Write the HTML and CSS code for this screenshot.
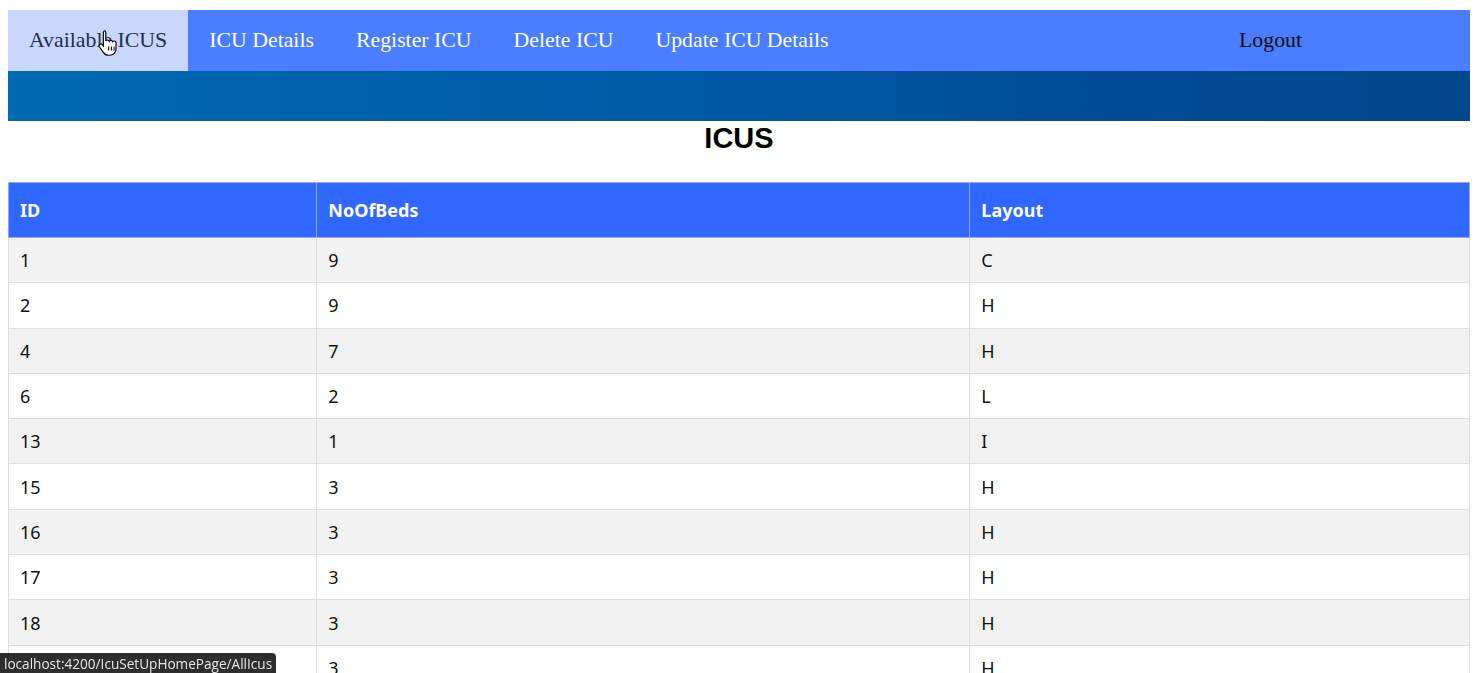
FILE: index.html
```html
<!DOCTYPE html>
<html lang="en">
<head>
<meta charset="utf-8">
<title>ICUS</title>
<link rel="stylesheet" href="styles.css">
</head>
<body>
<nav class="topnav">
  <a class="nav-item active" href="#">Available ICUS</a>
  <a class="nav-item" href="#">ICU Details</a>
  <a class="nav-item" href="#">Register ICU</a>
  <a class="nav-item" href="#">Delete ICU</a>
  <a class="nav-item" href="#">Update ICU Details</a>
  <a class="nav-item logout" href="#">Logout</a>
  <svg class="cursor" width="22" height="28" viewBox="0 0 18 24">
    <path d="M5.5 1.5c1 0 1.6.7 1.6 1.6v7.2c.3-.6.9-.9 1.5-.9.8 0 1.3.5 1.5 1.1.3-.5.8-.8 1.4-.8.8 0 1.3.5 1.5 1.2.3-.4.8-.6 1.300-.6 1 0 1.6.8 1.6 1.8v4.6c0 3.3-2.3 5.8-5.6 5.8H9.4c-2 0-3.3-.9-4.4-2.5L1.6 15.2c-.5-.8-.3-1.8.5-2.2.7-.4 1.5-.2 2 .4l.9 1.2V3.1c0-.9.5-1.6 1.5-1.6z" fill="#fff" stroke="#000" stroke-width="1"/>
    <path d="M9.6 15v3.5M11.9 15v3.5M14.2 15v3.5" stroke="#000" stroke-width="0.9"/>
  </svg>
</nav>
<div class="banner"></div>
<h2 class="title">ICUS</h2>
<table class="icu-table">
  <thead>
    <tr><th class="c-id">ID</th><th class="c-beds">NoOfBeds</th><th class="c-layout">Layout</th></tr>
  </thead>
  <tbody>
    <tr><td>1</td><td>9</td><td>C</td></tr>
    <tr><td>2</td><td>9</td><td>H</td></tr>
    <tr><td>4</td><td>7</td><td>H</td></tr>
    <tr><td>6</td><td>2</td><td>L</td></tr>
    <tr><td>13</td><td>1</td><td>I</td></tr>
    <tr><td>15</td><td>3</td><td>H</td></tr>
    <tr><td>16</td><td>3</td><td>H</td></tr>
    <tr><td>17</td><td>3</td><td>H</td></tr>
    <tr><td>18</td><td>3</td><td>H</td></tr>
    <tr><td>19</td><td>3</td><td>H</td></tr>
  </tbody>
</table>
<div class="statusbar">localhost:4200/IcuSetUpHomePage/AllIcus</div>
</body>
</html>
```
FILE: styles.css
```css
html, body {
  margin: 0;
  padding: 0;
  background: #fff;
}
body {
  padding: 10px 6px 0 8px;
  font-family: "Liberation Serif", serif;
}
.topnav {
  position: relative;
  display: flex;
  align-items: stretch;
  height: 61px;
  background: #4a7dff;
}
.nav-item {
  display: flex;
  align-items: center;
  padding: 0 21px 1px;
  font-size: 21.8px;
  color: #fff;
  text-decoration: none;
}
.nav-item.active {
  background: #c9d7fc;
  color: #1f2f4f;
}
.nav-item.logout {
  margin-left: auto;
  margin-right: 147px;
  color: #111;
}
.cursor {
  position: absolute;
  left: 89px;
  top: 19px;
}
.banner {
  height: 50px;
  background: linear-gradient(90deg, #0069b2 0%, #005aa6 45%, #004a93 80%, #00478c 100%);
}
.title {
  margin: 1px 0 28px;
  text-align: center;
  font-family: "Liberation Sans", Arial, sans-serif;
  font-weight: bold;
  font-size: 29px;
  line-height: 32px;
  color: #000;
}
.icu-table {
  width: 100%;
  border-collapse: collapse;
  font-family: "Noto Sans", "Open Sans", sans-serif;
  font-size: 18px;
  color: #111;
}
.icu-table th,
.icu-table td {
  border: 1px solid #dedede;
  text-align: left;
  padding: 0 11px;
}
.icu-table th {
  height: 54px;
  background: #3068ff;
  color: #fff;
  font-weight: bold;
  border-color: #8eaaf5;
}
.icu-table td {
  height: 44.3px;
}
.icu-table tbody tr:nth-child(odd) td {
  background: #f2f2f2;
}
.c-id { width: 21.1%; }
.c-beds { width: 44.7%; }
.statusbar {
  position: fixed;
  left: 0;
  bottom: 0;
  height: 20px;
  width: 272px;
  padding-left: 4px;
  background: #2e2e2e;
  border-top-right-radius: 4px;
  color: #e6e6e6;
  font-family: "Open Sans", "Liberation Sans", sans-serif;
  font-size: 13.6px;
  line-height: 21px;
  white-space: nowrap;
  overflow: hidden;
}
```
